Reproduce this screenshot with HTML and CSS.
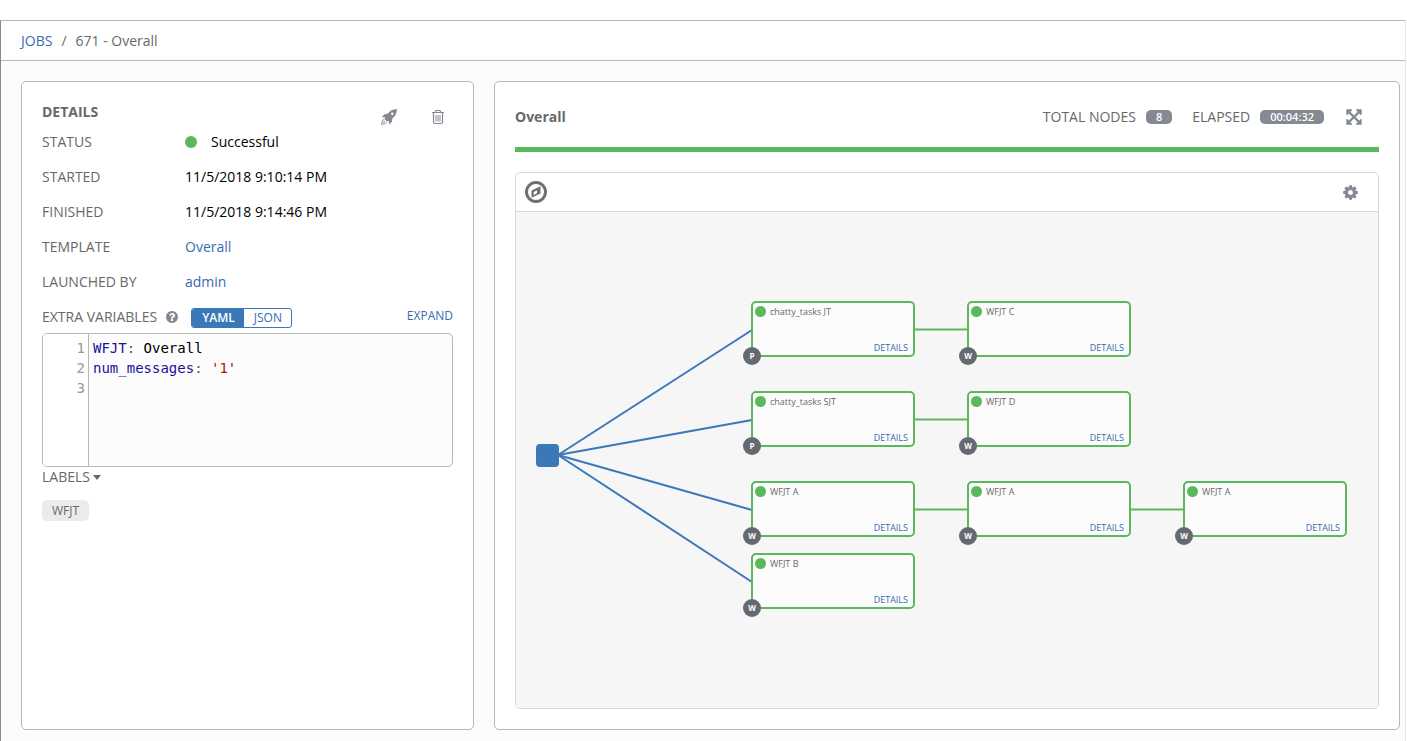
FILE: index.html
```html
<!DOCTYPE html>
<html lang="en">
<head>
<meta charset="utf-8">
<title>Jobs - Overall</title>
<link rel="stylesheet" href="styles.css">
</head>
<body>
<div class="page">
  <nav class="breadcrumb" aria-label="Breadcrumb">
    <a href="#">JOBS</a><span>/</span><span>671 - Overall</span>
  </nav>
  <main class="content">
    <section class="panel details">
      <header class="details-head">
        <h2>DETAILS</h2>
        <div class="details-actions">
          <button class="icon-btn" type="button" aria-label="Relaunch">
            <svg width="16" height="16" viewBox="0 0 16 16"><path fill-rule="evenodd" d="M16 0C11.500 .3 9 1.600 6.700 4.700L3.200 5.200L.8 8.600L4 8.100L3.500 10L6 12.500L7.900 12L8.200 15.600L11 12.800L11.400 9.300C14.500 7 15.800 4.400 16 0ZM11.300 3.600A1.200 1.200 0 1 1 11.300 6A1.200 1.200 0 1 1 11.300 3.600Z"/><path fill="none" stroke="currentColor" d="M3.200 10.300C1.500 11 .9 12.500 .6 15.300C3.400 15 5 14.300 5.700 12.700M2.200 13.700L3.900 12"/></svg>
          </button>
          <button class="icon-btn" type="button" aria-label="Delete">
            <svg width="14" height="16" viewBox="0 0 14 16" fill="none" stroke="currentColor"><path d="M1 3.500H13M4.500 3.500V2.500Q4.500 1.500 5.500 1.500H8.500Q9.500 1.500 9.500 2.500V3.500M2.500 3.500V13Q2.500 14.500 4 14.500H10Q11.500 14.500 11.500 13V3.500" stroke-width="1.200"/><path d="M5 6V12.500M7 6V12.500M9 6V12.500"/></svg>
          </button>
        </div>
      </header>
      <dl class="facts">
        <div><dt>STATUS</dt><dd><i class="dot"></i>Successful</dd></div>
        <div><dt>STARTED</dt><dd>11/5/2018 9:10:14 PM</dd></div>
        <div><dt>FINISHED</dt><dd>11/5/2018 9:14:46 PM</dd></div>
        <div><dt>TEMPLATE</dt><dd><a href="#">Overall</a></dd></div>
        <div><dt>LAUNCHED BY</dt><dd><a href="#">admin</a></dd></div>
      </dl>
      <div class="vars-head">
        <span>EXTRA VARIABLES</span>
        <svg class="help" width="14" height="14" viewBox="0 0 1792 1792"><path d="M1024 1376v-192q0-14-9-23t-23-9h-192q-14 0-23 9t-9 23v192q0 14 9 23t23 9h192q14 0 23-9t9-23zm256-672q0-88-55.500-163t-138.500-116-170-41q-243 0-371 213-15 24 8 42l132 100q7 6 19 6 16 0 25-12 53-68 86-92 34-24 86-24 48 0 85.500 26t37.500 59q0 38-20 61t-68 45q-63 28-115.500 86.500t-52.500 125.500v36q0 14 9 23t23 9h192q14 0 23-9t9-23q0-19 21.500-49.500t54.500-49.500q32-18 49-28.500t46-35 44.500-48 28-60.500 12.500-81zm384 192q0 209-103 385.500t-279.500 279.500-385.500 103-385.500-103-279.500-279.500-103-385.500 103-385.500 279.500-279.500 385.500-103 385.500 103 279.500 279.500 103 385.500z"/></svg>
        <div class="toggle"><button type="button" class="on">YAML</button><button type="button">JSON</button></div>
        <button type="button" class="expand">EXPAND</button>
      </div>
      <div class="editor">
        <pre class="gutter">1
2
3</pre>
        <pre class="code"><b>WFJT</b>: <em>Overall</em>
<b>num_messages</b>: <q>'1'</q></pre>
      </div>
      <button type="button" class="labels-btn">LABELS<i class="caret"></i></button>
      <div><span class="label">WFJT</span></div>
    </section>

    <section class="panel results">
      <header class="results-head">
        <h2>Overall</h2>
        <div class="stat">TOTAL NODES<span class="badge">8</span></div>
        <div class="stat">ELAPSED<span class="badge">00:04:32</span></div>
        <button class="icon-btn" type="button" aria-label="Expand">
          <svg width="18" height="18" viewBox="0 0 1792 1792"><path d="M1411 541l-355 355 355 355 144-144q29-31 70-14 39 17 39 59v448q0 26-19 45t-45 19h-448q-42 0-59-40-17-39 14-69l144-144-355-355-355 355 144 144q31 30 14 69-17 40-59 40h-448q-26 0-45-19t-19-45v-448q0-42 40-59 39-17 69 14l144 144 355-355-355-355-144 144q-19 19-45 19-12 0-24-5-40-17-40-59v-448q0-26 19-45t45-19h448q42 0 59 40 17 39-14 69l-144 144 355 355 355-355-144-144q-31-30-14-69 17-40 59-40h448q26 0 45 19t19 45v448q0 42-39 59-13 5-25 5-26 0-45-19z"/></svg>
        </button>
      </header>
      <div class="status-bar"></div>
      <div class="chart">
        <div class="toolbar">
          <button class="icon-btn compass" type="button" aria-label="Key">
            <svg width="24" height="24" viewBox="0 0 24 24"><circle cx="12" cy="12" r="9.500" fill="none" stroke="currentColor" stroke-width="3"/><path fill-rule="evenodd" d="M16.500 6.200V13.600L7.500 17.800V10.400ZM13 10.300L9.700 11.900V14.900L13 13.300Z"/></svg>
          </button>
          <button class="icon-btn" type="button" aria-label="Settings">
            <svg width="17" height="17" viewBox="0 0 1792 1792"><path d="M1152 896q0-106-75-181t-181-75-181 75-75 181 75 181 181 75 181-75 75-181zm512-109v222q0 12-8 23t-20 13l-185 28q-19 54-39 91 35 50 107 138 10 12 10 25t-9 23q-27 37-99 108t-94 71q-12 0-26-9l-138-108q-44 23-91 38-16 136-29 186-7 28-36 28h-222q-14 0-24.500-8.500t-11.500-21.500l-28-184q-49-16-90-37l-141 107q-10 9-25 9-14 0-25-11-126-114-165-168-7-10-7-23 0-12 8-23 15-21 51-66.500t54-70.500q-27-50-41-99l-183-27q-13-2-21-12.500t-8-23.500v-222q0-12 8-23t19-13l186-28q14-46 39-92-40-57-107-138-10-12-10-24 0-10 9-23 26-36 98.500-107.500t94.500-71.500q13 0 26 10l138 107q44-23 91-38 16-136 29-186 7-28 36-28h222q14 0 24.500 8.500t11.500 21.500l28 184q49 16 90 37l142-107q9-9 24-9 13 0 25 10 129 119 165 170 7 8 7 22 0 12-8 23-15 21-51 66.500t-54 70.500q26 50 41 98l183 28q13 2 21 12.500t8 23.500z"/></svg>
          </button>
        </div>
        <div class="canvas">
          <svg class="edges" width="862" height="496" viewBox="0 0 862 496" fill="none" stroke-width="2">
            <g stroke="#3b78b7"><path d="M42 243L236 118"/><path d="M42 243L236 208"/><path d="M42 243L236 298"/><path d="M42 243L236 370"/></g>
            <g stroke="#5cb85c"><path d="M398 117.500H453M398 207.500H453M398 297.500H453M614 297.500H669"/></g>
            <rect x="20" y="232" width="23" height="23" rx="4" fill="#3b78b7"/>
          </svg>
          <article class="node col1 row1"><span>chatty_tasks JT</span><a href="#">DETAILS</a><i>P</i></article>
          <article class="node col2 row1"><span>WFJT C</span><a href="#">DETAILS</a><i>W</i></article>
          <article class="node col1 row2"><span>chatty_tasks SJT</span><a href="#">DETAILS</a><i>P</i></article>
          <article class="node col2 row2"><span>WFJT D</span><a href="#">DETAILS</a><i>W</i></article>
          <article class="node col1 row3"><span>WFJT A</span><a href="#">DETAILS</a><i>W</i></article>
          <article class="node col2 row3"><span>WFJT A</span><a href="#">DETAILS</a><i>W</i></article>
          <article class="node col3 row3"><span>WFJT A</span><a href="#">DETAILS</a><i>W</i></article>
          <article class="node col1 row4"><span>WFJT B</span><a href="#">DETAILS</a><i>W</i></article>
        </div>
      </div>
    </section>
  </main>
</div>
</body>
</html>
```
FILE: styles.css
```css
* { box-sizing: border-box; }
body {
  margin: 0;
  min-height: 100vh;
  display: flex;
  padding: 20px 1px 0 0;
  background: #fff;
  color: #686868;
  font: 14px/20px "Open Sans", sans-serif;
}
a { color: #386cae; text-decoration: none; }
button { font: inherit; color: inherit; background: none; border: 0; padding: 0; cursor: pointer; }
h2 { margin: 0; font-size: 14px; line-height: 20px; font-weight: 700; }
svg { display: block; fill: currentColor; }
svg[fill="none"] { fill: none; }
.page {
  flex: 1;
  display: flex;
  flex-direction: column;
  border: solid #b7b7b7;
  border-width: 1px 1px 0;
  border-left-color: #848992;
  border-right-color: #e8e8e8;
  background: #fcfcfc;
}
.breadcrumb {
  display: flex;
  gap: 9px;
  padding: 10px 20px 9px;
  background: #fff;
  border-bottom: 1px solid #b7b7b7;
}
.content {
  flex: 1;
  display: grid;
  grid-template-columns: minmax(0, 1fr) minmax(0, 2fr);
  gap: 20px;
  padding: 20px 5px 11px 20px;
}
.panel {
  background: #fff;
  border: 1px solid #b7b7b7;
  border-radius: 5px;
  padding: 20px;
}
.icon-btn { color: #848992; }

.details-head { display: flex; justify-content: space-between; height: 30px; }
.details-actions { display: flex; align-items: center; gap: 34px; padding: 0 8px 0 0; }
.facts { margin: 0; }
.facts > div { display: flex; height: 35px; }
.facts dt { flex: 0 0 143px; }
.facts dd { margin: 0; color: #000; display: flex; align-items: flex-start; }
.dot { width: 12px; height: 12px; border-radius: 50%; background: #5cb85c; margin: 4px 14px 0 0; }
.vars-head { display: flex; align-items: flex-start; height: 26px; }
.help { color: #848992; margin: 3px 12px 0 8px; }
.toggle { display: flex; margin-top: 1px; border: 1px solid #3b78b7; border-radius: 3px; overflow: hidden; font-size: 12px; line-height: 18px; color: #386cae; }
.toggle button { padding: 0 9px 0 10px; }
.toggle .on { background: #3b78b7; color: #fff; font-weight: 600; }
.expand { margin-left: auto; font-size: 12px; line-height: 17px; color: #386cae; }
.editor {
  display: flex;
  height: 134px;
  border: 1px solid #b7b7b7;
  border-radius: 5px;
  background: #fcfcfc;
  overflow: hidden;
}
.editor pre { margin: 0; padding: 4px; font: 14px/20px "DejaVu Sans Mono", monospace; }
.gutter { width: 46px; text-align: right; background: #fff; border-right: 1px solid #b7b7b7; color: #999; }
.editor .gutter { padding-right: 3px; }
.code { color: #555; }
.code b { font-weight: 400; color: #219; }
.code em { font-style: normal; color: #000; }
.code q { color: #a11; quotes: none; }
.labels-btn { display: flex; align-items: center; gap: 3px; }
.caret { border: 4px solid transparent; border-top: 5px solid #686868; border-bottom: 0; }
.label { display: inline-block; margin-top: 13px; padding: 0 10px; border-radius: 5px; background: #ebebeb; font-size: 12px; line-height: 21px; }

.results { display: flex; flex-direction: column; }
.results-head { display: flex; align-items: center; height: 30px; padding-right: 16px; }
.results-head h2 { margin-right: auto; }
.stat { display: flex; align-items: center; margin-right: 20px; }
.stat + .icon-btn { margin-left: 1px; }
.badge { margin-left: 10px; padding: 0 10px; border-radius: 5px; background: #848992; color: #fff; font-size: 11px; line-height: 14px; font-weight: 600; }
.status-bar { height: 5px; margin: 15px 0 20px; background: #5cb85c; }
.chart { flex: 1; display: flex; flex-direction: column; border: 1px solid #d7d7d7; border-radius: 5px; overflow: hidden; }
.toolbar { display: flex; align-items: center; justify-content: space-between; height: 39px; padding: 0 19px 0 8px; border-bottom: 1px solid #d7d7d7; }
.compass { color: #707070; }
.canvas { flex: 1; position: relative; background: #f6f6f6; }
.edges { position: absolute; left: 0; top: 0; fill: none; }
.node {
  position: absolute;
  width: 164px;
  height: 56px;
  border: 2px solid #5cb85c;
  border-radius: 5px;
  background: #fcfcfc;
  font-size: 9px;
  line-height: 12px;
}
.node span { position: absolute; left: 17px; top: 3px; }
.node span::before { content: ""; position: absolute; left: -15px; top: 0; width: 11px; height: 11px; border-radius: 50%; background: #5cb85c; }
.node a { position: absolute; right: 5px; bottom: 1px; }
.node i { position: absolute; left: -10px; bottom: -10px; width: 18px; height: 18px; border-radius: 50%; background: #646972; color: #fff; font: 700 8px/18px "Open Sans", sans-serif; text-align: center; }
.col1 { left: 235px; }
.col2 { left: 451px; }
.col3 { left: 667px; }
.row1 { top: 89px; }
.row2 { top: 179px; }
.row3 { top: 269px; }
.row4 { top: 341px; }
```
